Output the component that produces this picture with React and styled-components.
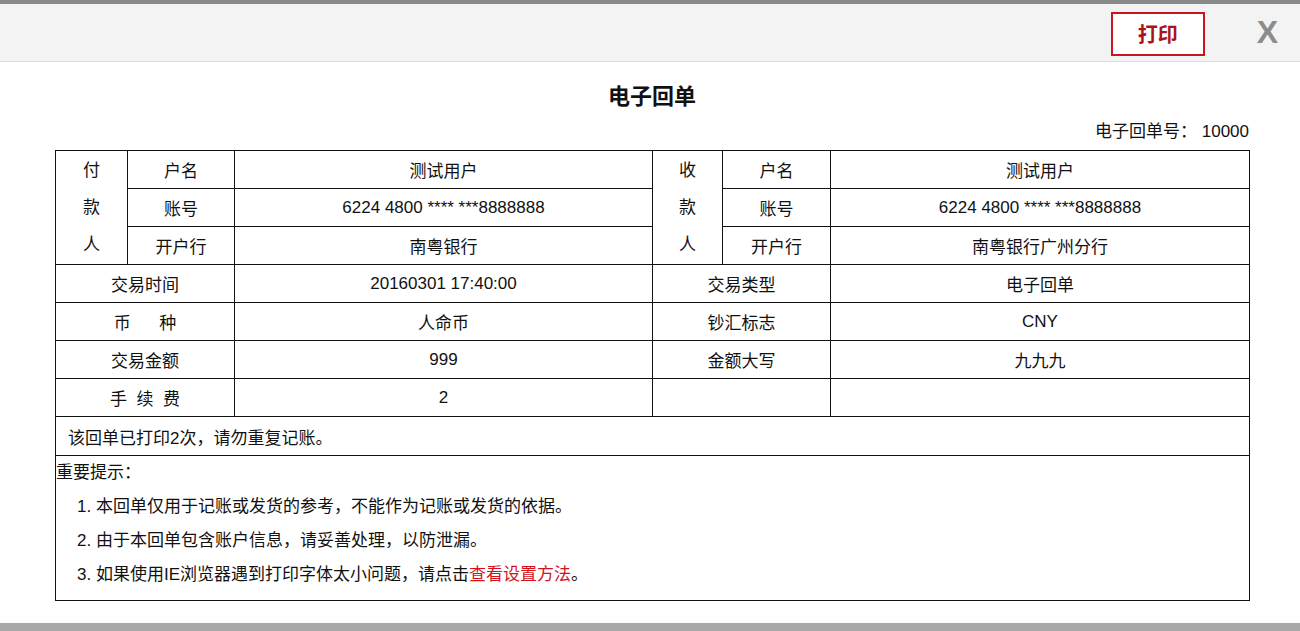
import styled, { createGlobalStyle } from 'styled-components'

const GlobalStyle = createGlobalStyle`
  html, body { margin: 0; padding: 0; background: #fff; }
  body { font-family: "Liberation Sans", "Noto Sans CJK SC", sans-serif; color: #111; }
`
const Page = styled('div')`
  width: 1300px;
  height: 631px;
  display: flex;
  flex-flow: column nowrap;
  border-top: 4px solid #8a8a8a;
  border-bottom: 8px solid #a8a8a8;
  box-sizing: border-box;
  background: #fff;
`
const Header = styled('header')`
  height: 58px;
  flex: none;
  display: flex;
  align-items: center;
  justify-content: flex-end;
  gap: 52px;
  padding-right: 22px;
  background: #f3f3f3;
  border-bottom: 1px solid #dcdcdc;
  box-sizing: border-box;
`
const PrintButton = styled('button')`
  width: 94px;
  height: 44px;
  border: 2px solid #c8161d;
  background: #fff;
  color: #a8141a;
  font-family: "Noto Sans CJK SC", sans-serif;
  font-weight: 700;
  font-size: 20px;
  margin-top: 2px;
`
const Close = styled('span')`
  font-family: "Liberation Sans", sans-serif;
  font-weight: 700;
  font-size: 32px;
  color: #8c8c8c;
`
const Body = styled('main')`
  flex: 1;
  padding: 14px 51px 0 55px;
  display: flex;
  flex-flow: column nowrap;
`
const Title = styled('h1')`
  margin: 0;
  text-align: center;
  font-family: "Noto Sans CJK SC", sans-serif;
  font-size: 22px;
  font-weight: 700;
  line-height: 36px;
`
const Number = styled('div')`
  text-align: right;
  font-size: 17px;
  line-height: 24px;
  margin: 8px 0 6px;
`
const Table = styled('table')`
  width: 1194px;
  border-collapse: collapse;
  table-layout: fixed;
  font-size: 17px;
  td {
    border: 1.5px solid #111;
    height: 37px;
    padding: 0;
    text-align: center;
  }
`
const Side = styled('td')`
  line-height: 37px;
`
const Note = styled('td')`
  && { text-align: left; padding-left: 12px; height: 38px; }
`
const Tips = styled('td')`
  && { text-align: left; vertical-align: top; height: 144px; }
`
const TipTitle = styled('div')`
  line-height: 34px;
`
const TipList = styled('ol')`
  margin: 0;
  padding-left: 40px;
  li { line-height: 34px; }
`
const Link = styled('span')`
  color: #d4121c;
`

export default function App() {
  return (
    <Page>
      <GlobalStyle />
      <Header>
        <PrintButton>打印</PrintButton>
        <Close>X</Close>
      </Header>
      <Body>
        <Title>电子回单</Title>
        <Number>电子回单号：&nbsp;10000</Number>
        <Table>
          <colgroup>
            <col style={{ width: 72 }} />
            <col style={{ width: 107 }} />
            <col style={{ width: 418 }} />
            <col style={{ width: 70 }} />
            <col style={{ width: 108 }} />
            <col style={{ width: 419 }} />
          </colgroup>
          <tbody>
            <tr>
              <Side rowSpan={3}>付<br />款<br />人</Side>
              <td>户名</td><td>测试用户</td>
              <Side rowSpan={3}>收<br />款<br />人</Side>
              <td>户名</td><td>测试用户</td>
            </tr>
            <tr>
              <td>账号</td><td>6224 4800 **** ***8888888</td>
              <td>账号</td><td>6224 4800 **** ***8888888</td>
            </tr>
            <tr>
              <td>开户行</td><td>南粤银行</td>
              <td>开户行</td><td>南粤银行广州分行</td>
            </tr>
            <tr>
              <td colSpan={2}>交易时间</td><td>20160301 17:40:00</td>
              <td colSpan={2}>交易类型</td><td>电子回单</td>
            </tr>
            <tr>
              <td colSpan={2}>币&nbsp;&nbsp;&nbsp;&nbsp;&nbsp;&nbsp;种</td><td>人命币</td>
              <td colSpan={2}>钞汇标志</td><td>CNY</td>
            </tr>
            <tr>
              <td colSpan={2}>交易金额</td><td>999</td>
              <td colSpan={2}>金额大写</td><td>九九九</td>
            </tr>
            <tr>
              <td colSpan={2}>手&nbsp;&nbsp;续&nbsp;&nbsp;费</td><td>2</td>
              <td colSpan={2}></td><td></td>
            </tr>
            <tr><Note colSpan={6}>该回单已打印2次，请勿重复记账。</Note></tr>
            <tr>
              <Tips colSpan={6}>
                <TipTitle>重要提示：</TipTitle>
                <TipList>
                  <li>本回单仅用于记账或发货的参考，不能作为记账或发货的依据。</li>
                  <li>由于本回单包含账户信息，请妥善处理，以防泄漏。</li>
                  <li>如果使用IE浏览器遇到打印字体太小问题，请点击<Link>查看设置方法</Link>。</li>
                </TipList>
              </Tips>
            </tr>
          </tbody>
        </Table>
      </Body>
    </Page>
  )
}
